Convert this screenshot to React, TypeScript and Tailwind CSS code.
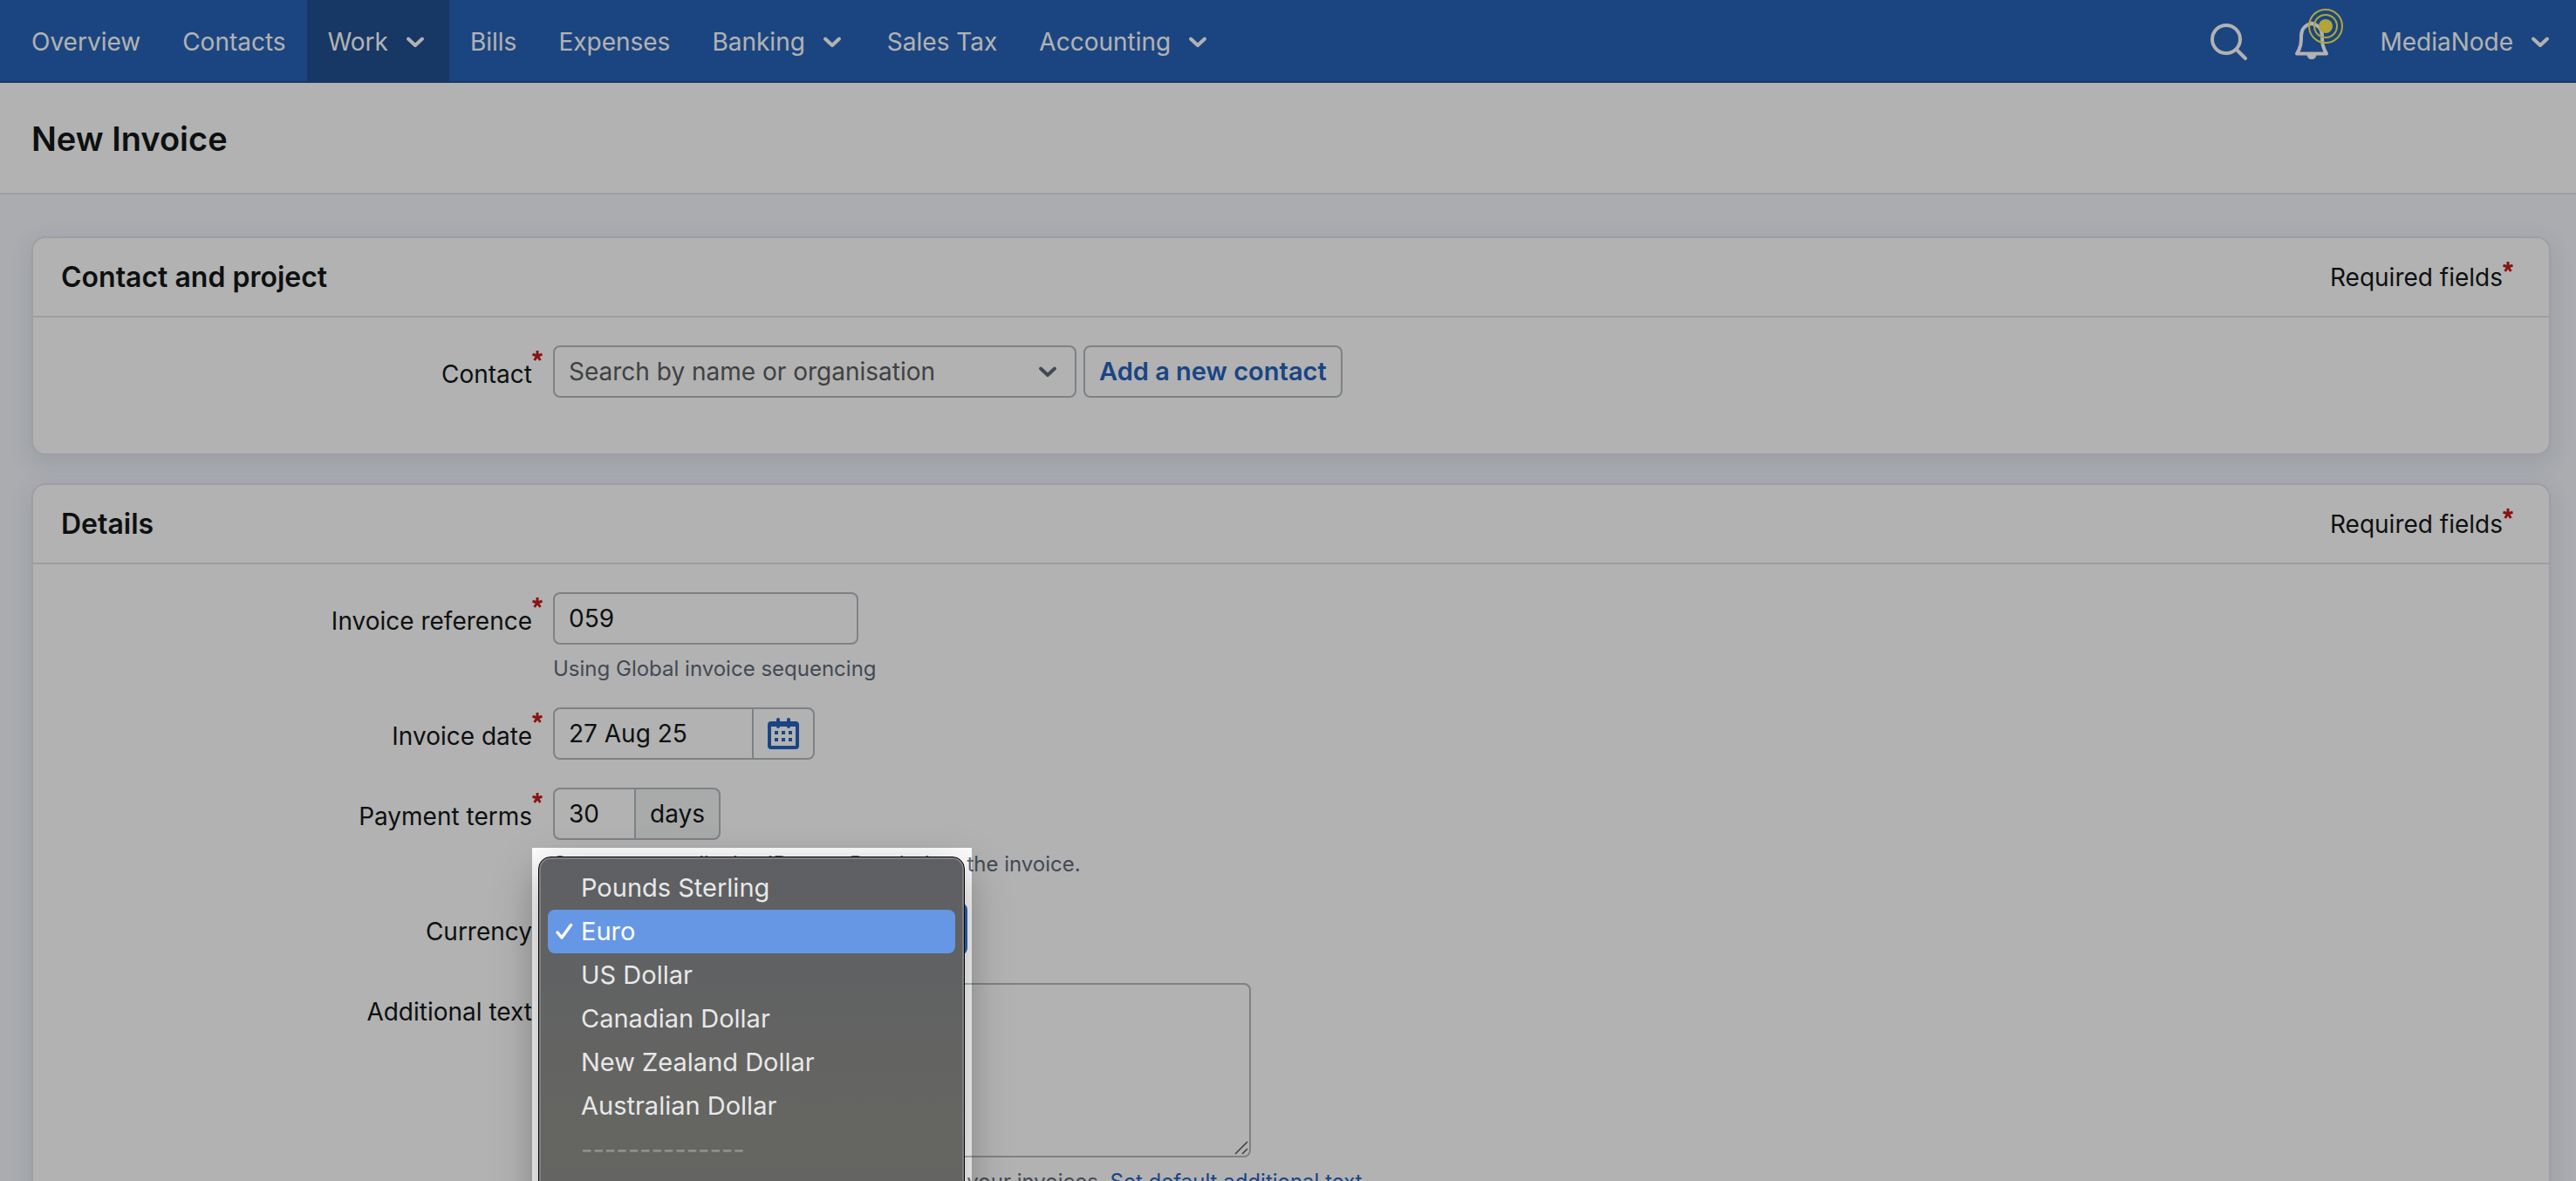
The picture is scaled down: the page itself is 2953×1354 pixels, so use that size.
import type { ReactNode } from 'react'

const navItems = [
  { label: 'Overview' },
  { label: 'Contacts' },
  { label: 'Work', menu: true, active: true },
  { label: 'Bills' },
  { label: 'Expenses' },
  { label: 'Banking', menu: true },
  { label: 'Sales Tax' },
  { label: 'Accounting', menu: true },
]

const currencies = [
  'Pounds Sterling',
  'Euro',
  'US Dollar',
  'Canadian Dollar',
  'New Zealand Dollar',
  'Australian Dollar',
]

function Chevron({ className = '' }: { className?: string }) {
  return (
    <svg viewBox="0 0 22 14" className={`h-[14px] w-[22px] shrink-0 ${className}`} fill="none" aria-hidden="true">
      <path d="M3 3.500l8 7.500 8-7.500" stroke="currentColor" strokeWidth="4" strokeLinecap="round" strokeLinejoin="round" />
    </svg>
  )
}

function SearchIcon() {
  return (
    <svg viewBox="0 0 44 44" className="size-[44px]" fill="none" stroke="currentColor" aria-hidden="true">
      <circle cx="19" cy="19" r="16" strokeWidth="4" />
      <path d="M30.500 30.500L41 41" strokeWidth="4" strokeLinecap="round" />
    </svg>
  )
}

function BellIcon() {
  return (
    <svg viewBox="0 0 56 60" className="h-[60px] w-[56px]" fill="none" aria-hidden="true">
      <path
        d="M20 17c-8 1.500-12 7-12 14 0 10-1 14-5 20.500h34c-4-6.500-5-10.500-5-20.500 0-7-4-12.500-12-14z"
        stroke="currentColor"
        strokeWidth="4"
        strokeLinejoin="round"
      />
      <path d="M17.500 17a2.500 2.500 0 0 1 5 0z" fill="currentColor" />
      <path d="M14.500 53h11c-.5 3-2.500 5-5.500 5s-5-2-5.500-5z" fill="currentColor" />
      <g className="text-[#fded54]">
        <circle cx="36" cy="20" r="8" fill="currentColor" />
        <circle cx="36" cy="20" r="13" stroke="currentColor" strokeWidth="2" />
        <circle cx="36" cy="20" r="19" stroke="currentColor" strokeWidth="2" />
      </g>
    </svg>
  )
}

function CalendarIcon() {
  return (
    <svg viewBox="0 0 36 36" className="size-[36px]" aria-hidden="true">
      <rect x="2" y="6" width="32" height="28" rx="2" fill="none" stroke="currentColor" strokeWidth="4" />
      <path d="M2 6h32v4H2zM2 32h32v3H2z" fill="currentColor" />
      <path d="M12 2v8M24 2v8" stroke="currentColor" strokeWidth="4" strokeLinecap="round" />
      <path d="M8 15h4v4H8zM16 15h4v4h-4zM24 15h4v4h-4zM8 23h4v4H8zM16 23h4v4h-4zM24 23h4v4h-4z" fill="currentColor" />
    </svg>
  )
}

function Asterisk({ className = '' }: { className?: string }) {
  return (
    <svg viewBox="0 0 12 12" className={`absolute left-full size-[12px] text-[#c51e1a] ${className}`} aria-hidden="true">
      <path
        d="M6 6V0M6 6L.5 4.200M6 6l5.500-1.800M6 6l-3.400 5M6 6l3.400 5"
        stroke="currentColor"
        strokeWidth="3"
        fill="none"
      />
    </svg>
  )
}

function Card({ title, children }: { title: string; children: ReactNode }) {
  return (
    <section className="rounded-[16px] border-2 border-[#e2e3ea] bg-white shadow-[0_8px_24px_4px_rgba(50,100,130,0.10)]">
      <div className="flex h-[91px] items-center justify-between border-b-2 border-[#e2e3ea] pr-[53px] pl-8">
        <h2 className="text-[32px] font-semibold">{title}</h2>
        <span className="relative">
          Required fields
          <Asterisk className="top-0.5" />
        </span>
      </div>
      <div className="pt-8 pb-8">{children}</div>
    </section>
  )
}

interface FieldProps {
  label: string
  htmlFor: string
  required?: boolean
  help?: ReactNode
  children: ReactNode
}

function Field({ label, htmlFor, required, help, children }: FieldProps) {
  return (
    <div className="mb-8 grid grid-cols-[572px_1fr] gap-x-6">
      <label htmlFor={htmlFor} className="relative h-[60px] pt-[3px] text-right leading-[60px]">
        {label}
        {required && <Asterisk className="top-[6px]" />}
      </label>
      <div>
        {children}
        {help && <p className="h-10 pt-2 text-[24px] leading-10 whitespace-nowrap text-[#5f6b78]">{help}</p>}
      </div>
    </div>
  )
}

function CurrencyMenu() {
  return (
    <>
      <ul
        role="listbox"
        aria-label="Currency"
        className="absolute -top-[53px] -left-[17px] z-10 h-[600px] w-[489px] rounded-[14px] border border-black bg-linear-to-b from-[#5d5f63] via-[#656562] via-50% to-[#626262] px-[10px] pt-[10px] text-[29px] leading-[50px] text-[#e8e8e8] shadow-[inset_0_0_0_2px_#7f8082,0_16px_50px_rgba(0,0,0,0.35)]"
      >
        {currencies.map((name) => {
          const selected = name === 'Euro'
          return (
            <li
              key={name}
              role="option"
              aria-selected={selected}
              className={`flex h-[50px] items-center rounded-[8px] ${selected ? 'bg-[#6697e4] text-white' : ''}`}
            >
              <span className="flex w-[38px] justify-center">
                {selected && (
                  <svg viewBox="0 0 20 20" className="size-[20px]" fill="none" aria-hidden="true">
                    <path d="M2 11l5 6L17.500 2.500" stroke="currentColor" strokeWidth="3.500" strokeLinecap="round" strokeLinejoin="round" />
                  </svg>
                )}
              </span>
              {name}
            </li>
          )
        })}
        <li role="presentation" className="pl-[38px] font-medium text-[#8e8e8c]">
          --------------
        </li>
      </ul>
      {/* dims everything outside the open menu */}
      <div className="pointer-events-none absolute -top-[63px] -left-6 z-20 h-[620px] w-[504px] shadow-[0_0_0_4000px_rgba(0,0,0,0.3)]" />
    </>
  )
}

const inputClass = 'block h-[60px] rounded-[8px] border-2 border-[#b3bbc1] bg-white px-4'

export default function App() {
  return (
    <div className="h-screen overflow-hidden bg-[#f4f6fc] font-[Inter,sans-serif] text-[28px] leading-10 text-[#141717]">
      <header className="flex h-[95px] items-stretch justify-between border-b-2 border-[#215091] bg-[#2864b8] pr-[30px] pl-3 text-white">
        <nav className="flex">
          {navItems.map((item) => (
            <a
              key={item.label}
              href="#"
              className={`flex items-center gap-5 px-6 pt-0.5 whitespace-nowrap ${item.active ? 'bg-[#215091]' : ''}`}
            >
              {item.label}
              {item.menu && <Chevron className="mr-1" />}
            </a>
          ))}
        </nav>
        <div className="flex items-center pt-0.5">
          <button type="button" aria-label="Search" className="mr-[53px]">
            <SearchIcon />
          </button>
          <button type="button" aria-label="Notifications" className="mr-[42px] pb-4">
            <BellIcon />
          </button>
          <button type="button" className="flex items-center gap-5">
            MediaNode
            <Chevron />
          </button>
        </div>
      </header>

      <div className="flex h-[128px] items-center border-b-2 border-[#e2e3ea] bg-white pt-0.5 pl-9">
        <h1 className="text-[38px] font-semibold">New Invoice</h1>
      </div>

      <main className="flex flex-col gap-8 pt-12 pr-[29px] pl-9">
        <Card title="Contact and project">
          <Field label="Contact" htmlFor="contact" required>
            <div className="flex gap-2">
              <div className="relative w-[600px]">
                <select id="contact" className={`${inputClass} w-full appearance-none text-[#5b5e61]`}>
                  <option>Search by name or organisation</option>
                </select>
                <Chevron className="pointer-events-none absolute top-[23px] right-[22px] text-[#5f6b78]" />
              </div>
              <button type="button" className={`${inputClass} text-[29px] font-semibold text-[#2563bf]`}>
                Add a new contact
              </button>
            </div>
          </Field>
        </Card>

        <Card title="Details">
          <Field label="Invoice reference" htmlFor="reference" required help="Using Global invoice sequencing">
            <input id="reference" defaultValue="059" className={`${inputClass} w-[350px]`} />
          </Field>

          <Field label="Invoice date" htmlFor="date" required>
            <div className="flex">
              <input id="date" defaultValue="27 Aug 25" className={`${inputClass} w-[230px] rounded-r-none`} />
              <button
                type="button"
                aria-label="Choose date"
                className="flex h-[60px] w-[70px] items-center justify-center rounded-r-[8px] border-2 border-l-0 border-[#b3bbc1] text-[#2563bf]"
              >
                <CalendarIcon />
              </button>
            </div>
          </Field>

          <Field
            label="Payment terms"
            htmlFor="terms"
            required
            help="Set to zero to display 'Due on Receipt' on the invoice."
          >
            <div className="flex">
              <input id="terms" defaultValue="30" className={`${inputClass} w-[95px] rounded-r-none`} />
              <span className="flex h-[60px] items-center rounded-r-[8px] border-2 border-l-0 border-[#b3bbc1] bg-[#f2f4f4] px-4">
                days
              </span>
            </div>
          </Field>

          <Field label="Currency" htmlFor="currency">
            <div className="relative">
              <select
                id="currency"
                defaultValue="Euro"
                className="block h-[60px] w-[475px] appearance-none rounded-[8px] border-4 border-[#2864b8] px-4"
              >
                {currencies.map((name) => (
                  <option key={name}>{name}</option>
                ))}
              </select>
              <CurrencyMenu />
            </div>
          </Field>

          <Field
            label="Additional text"
            htmlFor="additional"
            help={
              <>
                This text will be included at the bottom of your invoices.{' '}
                <a href="#" className="text-[#2563bf]">
                  Set default additional text
                </a>
              </>
            }
          >
            <div className="relative w-[800px]">
              <textarea
                id="additional"
                className="block h-[200px] w-full resize-none rounded-[8px] border-2 border-[#b3bbc1] bg-white p-4"
              />
              <svg viewBox="0 0 16 16" className="pointer-events-none absolute right-[3px] bottom-[3px] size-[16px]" aria-hidden="true">
                <path d="M1 15L15 1M9 15l6-6" stroke="#55585a" strokeWidth="1.500" />
              </svg>
            </div>
          </Field>
        </Card>
      </main>
    </div>
  )
}
